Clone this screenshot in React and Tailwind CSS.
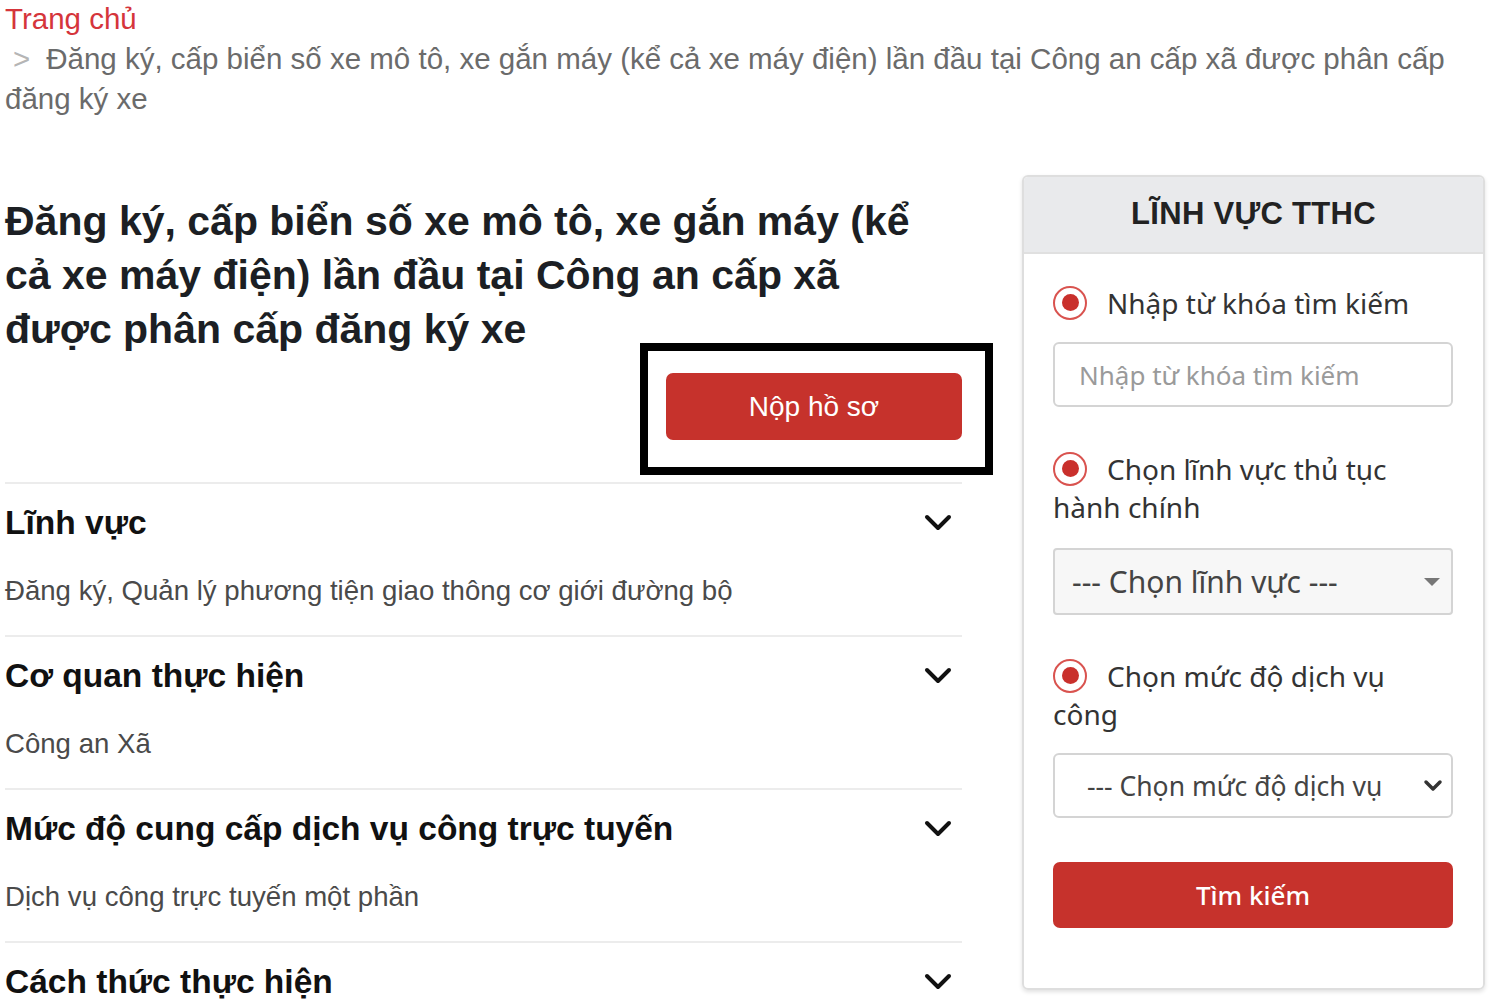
import React from 'react'

const sections = [
  { title: 'Lĩnh vực', text: 'Đăng ký, Quản lý phương tiện giao thông cơ giới đường bộ' },
  { title: 'Cơ quan thực hiện', text: 'Công an Xã' },
  { title: 'Mức độ cung cấp dịch vụ công trực tuyến', text: 'Dịch vụ công trực tuyến một phần' },
  { title: 'Cách thức thực hiện', text: '' }
]

const Chevron = ({ className = '' }) => (
  <svg className={className} width="28" height="18" viewBox="0 0 28 18" fill="none">
    <polyline points="3,3 14,14 25,3" stroke="#111" strokeWidth="4" strokeLinecap="round" strokeLinejoin="round" />
  </svg>
)

const Radio = () => (
  <span className="relative -top-[4px] inline-flex items-center justify-center w-[34px] h-[34px] -my-[10px] rounded-full border-2 border-[#d9534f] mr-[20px] align-middle">
    <span className="w-[17px] h-[17px] rounded-full bg-[#c9302c]" />
  </span>
)

const App = () => {
  return (
    <div className="min-h-[1008px] bg-white pl-[5px] overflow-hidden" style={{ fontFamily: '"Liberation Sans", Arial, sans-serif' }}>
      {/* Breadcrumb */}
      <div className="w-[1462px] text-[29.5px] leading-[40px] text-[#6b6b6b] -mt-[1px]">
        <div className="text-[#d5353b]">Trang chủ</div>
        <div>
          <span className="text-[#b5b5b5] ml-[8px] mr-[16px]">&gt;</span>
          Đăng ký, cấp biển số xe mô tô, xe gắn máy (kể cả xe máy điện) lần đầu tại Công an cấp xã được phân cấp đăng ký xe
        </div>
      </div>

      <div className="flex gap-[60px] mt-[56px]">
        {/* Main column */}
        <div className="w-[957px] shrink-0 pt-[19px]">
          <h1 className="text-[41px] leading-[54px] font-bold text-[#1c1f24] pr-[30px]">
            Đăng ký, cấp biển số xe mô tô, xe gắn máy (kể cả xe máy điện) lần đầu tại Công an cấp xã được phân cấp đăng ký xe
          </h1>

          <div className="flex justify-end mt-[17px] mb-[42px]">
            <div className="relative">
              <button className="w-[296px] h-[67px] rounded-[7px] bg-[#c6322c] text-white text-[28px]">
                Nộp hồ sơ
              </button>
              <div className="absolute left-[-26px] top-[-30px] w-[353px] h-[132px] border-[8px] border-black pointer-events-none" />
            </div>
          </div>

          {sections.map(s => (
            <div key={s.title} className="border-t-2 border-[#ececec] pt-[19px] pb-[24px]">
              <div className="flex items-center justify-between">
                <div className="text-[33.5px] leading-[40px] font-bold text-[#111]">{s.title}</div>
                <Chevron className="mr-[10px]" />
              </div>
              {s.text && (
                <div className="mt-[28px] text-[27.6px] leading-[40px] text-[#4a4a4a]">{s.text}</div>
              )}
            </div>
          ))}
        </div>

        {/* Sidebar */}
        <div className="w-[463px] shrink-0 h-[815px] rounded-[6px] border-2 border-[#dedede] shadow-[0_2px_4px_rgba(0,0,0,0.12)] overflow-hidden">
          <div className="h-[77px] bg-[#e9eaec] border-b-2 border-[#e0e0e0] flex items-center justify-center">
            <span className="text-[31px] font-bold text-[#222] tracking-[0.3px]">LĨNH VỰC TTHC</span>
          </div>
          <div className="pl-[29px] pr-[30px] pt-[30px] text-[28px] leading-[38px] text-[#333]" style={{ fontFamily: '"Noto Sans", "Open Sans", sans-serif' }}>
            <div><Radio />Nhập từ khóa tìm kiếm</div>
            <div className="mt-[20px] h-[65px] rounded-[6px] border-2 border-[#d4d4d4] flex items-center pl-[24px] text-[26px] text-[#9a9a9a]">
              Nhập từ khóa tìm kiếm
            </div>

            <div className="mt-[43px]"><Radio />Chọn lĩnh vực thủ tục hành chính</div>
            <div className="mt-[22px] h-[67px] rounded-[4px] border-2 border-[#d4d4d4] bg-[#f7f7f7] flex items-center justify-between pl-[17px] pr-[10px] text-[30px] text-[#444]">
              <span>--- Chọn lĩnh vực ---</span>
              <svg width="18" height="10" viewBox="0 0 18 10"><polygon points="1,1 17,1 9,9" fill="#777" /></svg>
            </div>

            <div className="mt-[42px]"><Radio />Chọn mức độ dịch vụ công</div>
            <div className="mt-[20px] h-[65px] rounded-[6px] border-2 border-[#d4d4d4] bg-white flex items-center justify-between pl-[32px] pr-[8px] text-[26.5px] text-[#444]">
              <span>--- Chọn mức độ dịch vụ</span>
              <svg width="20" height="14" viewBox="0 0 20 14" fill="none">
                <polyline points="3,3 10,10 17,3" stroke="#333" strokeWidth="3.5" strokeLinecap="round" strokeLinejoin="round" />
              </svg>
            </div>

            <button className="mt-[44px] w-full h-[66px] rounded-[7px] bg-[#c6322c] text-white text-[26px] font-medium">
              Tìm kiếm
            </button>
          </div>
        </div>
      </div>
    </div>
  )
}

export default App
